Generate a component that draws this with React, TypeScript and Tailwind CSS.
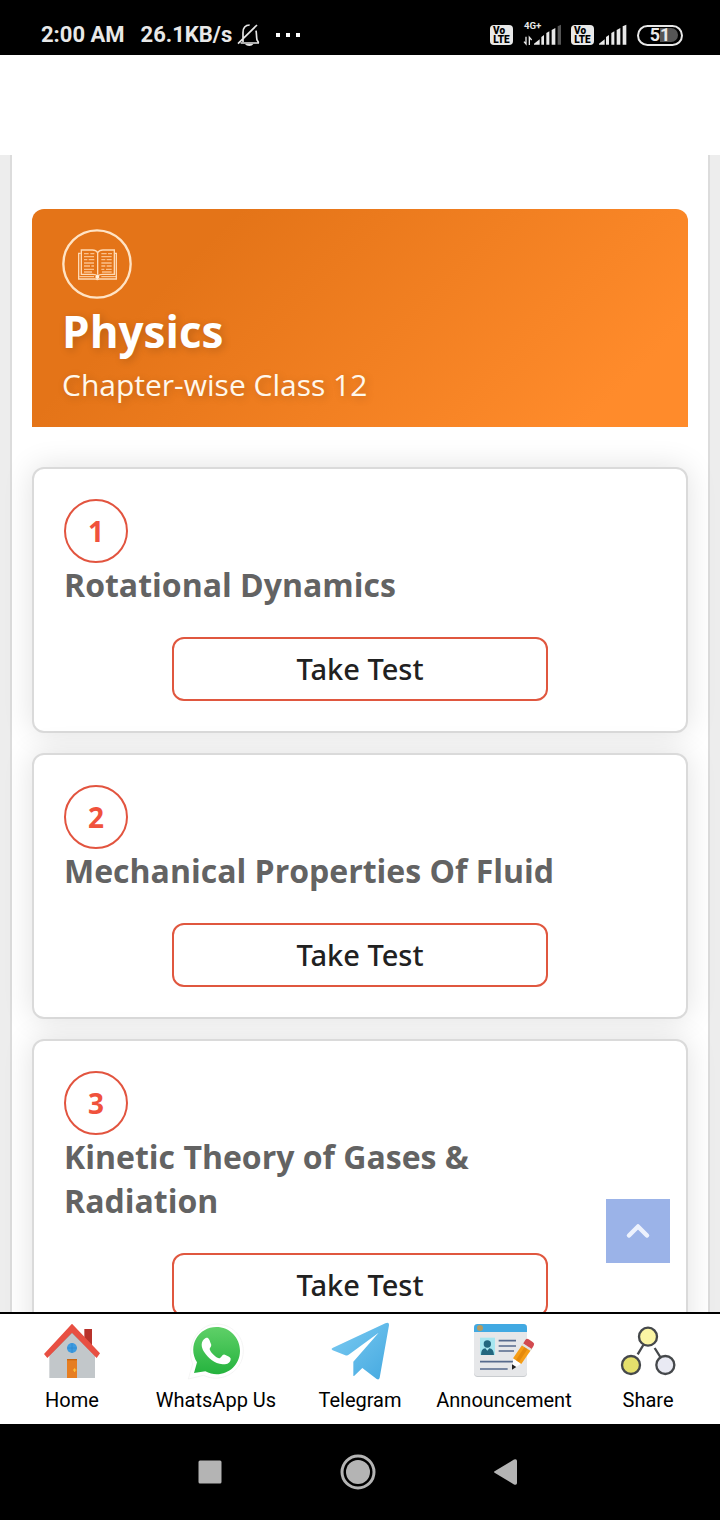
import type { ReactNode } from "react";
import { ChevronUp } from "lucide-react";

type Chapter = {
  id: number;
  title: string;
};

type NavItem = {
  label: string;
  icon: ReactNode;
};

const chapters: Chapter[] = [
  { id: 1, title: "Rotational Dynamics" },
  { id: 2, title: "Mechanical Properties Of Fluid" },
  { id: 3, title: "Kinetic Theory of Gases & Radiation" },
];

const navItems: NavItem[] = [
  { label: "Home", icon: <HomeIcon /> },
  { label: "WhatsApp Us", icon: <WhatsAppIcon /> },
  { label: "Telegram", icon: <TelegramIcon /> },
  { label: "Announcement", icon: <AnnouncementIcon /> },
  { label: "Share", icon: <ShareIcon /> },
];

export default function App() {
  return (
    <div className="flex h-screen flex-col overflow-hidden bg-white font-['Open_Sans','Noto_Sans',sans-serif]">
      <StatusBar />

      <div className="h-[100px] shrink-0" />

      <div className="relative flex min-h-0 flex-1 flex-col">
        <main className="min-h-0 flex-1 overflow-y-auto bg-[#ededed] px-[10px] [scrollbar-width:none]">
          <div className="border-x-2 border-[#dcdcdc] bg-white px-5 pt-[54px] pb-10">
            <SubjectBanner />

            <div className="mt-10 flex flex-col gap-5">
              {chapters.map((chapter) => (
                <ChapterCard key={chapter.id} chapter={chapter} />
              ))}
            </div>
          </div>
        </main>

        <button
          aria-label="Back to top"
          className="absolute right-[50px] bottom-[49px] flex size-16 items-center justify-center bg-[#9bb3e8] text-[#edf2fd]"
        >
          <ChevronUp size={36} strokeWidth={3} />
        </button>
      </div>

      <nav className="grid shrink-0 grid-cols-5 border-t-2 border-black bg-white pt-2 pb-1.5 font-[Roboto,sans-serif]">
        {navItems.map((item) => (
          <a
            key={item.label}
            href="#"
            className="flex flex-col items-center text-xl leading-9 whitespace-nowrap text-black"
          >
            {item.icon}
            {item.label}
          </a>
        ))}
      </nav>

      <SystemBar />
    </div>
  );
}

function SubjectBanner() {
  return (
    <header className="rounded-t-xl bg-[linear-gradient(135deg,#e47418_24%,#ff8b2b_88%)] px-[30px] pt-5 pb-5 text-white">
      <BookIcon />

      <h1 className="text-[44px] leading-[64px] font-bold [text-shadow:2px_2px_8px_rgba(0,0,0,0.18)]">
        Physics
      </h1>

      <p className="text-[30px] leading-11 text-[#fff8ec] [text-shadow:2px_2px_8px_rgba(0,0,0,0.18)]">
        Chapter-wise Class 12
      </p>
    </header>
  );
}

function ChapterCard({ chapter }: { chapter: Chapter }) {
  return (
    <section className="flex flex-col rounded-xl border-2 border-[#dadada] bg-white p-[30px] shadow-[0_0_30px_rgba(0,0,0,0.12)]">
      <span className="flex size-16 items-center justify-center rounded-full border-2 border-[#e2543f] text-[28px] leading-10 font-bold text-[#f0523c]">
        {chapter.id}
      </span>

      <h2 className="pr-12 text-[32px] leading-11 font-bold text-[#636363]">
        {chapter.title}
      </h2>

      <button className="mx-[108px] mt-[30px] h-16 rounded-xl border-2 border-[#e0573f] font-['Noto_Sans','Open_Sans',sans-serif] text-[29px] font-medium text-[#212121]">
        Take Test
      </button>
    </section>
  );
}

function StatusBar() {
  return (
    <div className="flex h-[55px] shrink-0 items-center bg-black pt-[15px] pr-[37px] pl-[41px] font-[Roboto,sans-serif] text-[22px] leading-10 font-bold text-[#e8e8e8]">
      <span>2:00 AM</span>
      <span className="ml-4">26.1KB/s</span>

      <svg viewBox="711 69 69 72" className="ml-[5px] h-6 w-[23px]" fill="none">
        <path
          d="M729 126V98c0-16 8-23 20-23M768 92c2 8 1 20 3 28l5 8M722 129h55M714 131l57-56"
          stroke="#e8e8e8"
          strokeWidth="5"
        />
        <path d="M735 132h25c-4 8-20 8-25 0Z" fill="#e8e8e8" />
      </svg>

      <div className="ml-4 flex gap-1.5">
        <i className="size-1 bg-white" />
        <i className="size-1 bg-white" />
        <i className="size-1 bg-white" />
      </div>

      <div className="ml-auto flex items-center">
        <VolteBadge />

        <svg viewBox="159 60 120 90" className="ml-2.5 h-[30px] w-10">
          <text x="162" y="88" fontSize="29" fontWeight="700" fill="#e8e8e8">
            4G+
          </text>
          <path
            d="M168 110v22l-6-7M178 135v-23l7 8"
            stroke="#e8e8e8"
            strokeWidth="4"
            fill="none"
          />
          <path
            d="M192 134v-3l17-13v16ZM214 134v-23l8-6v29ZM229 134v-35l9-5v40ZM245 134v-44l11-6v50Z"
            fill="#e8e8e8"
          />
          <path d="M263 134V79l10-5v60Z" fill="#555" />
        </svg>

        <div className="ml-2 flex">
          <VolteBadge />
        </div>

        <svg viewBox="381 60 87 90" className="ml-1 h-[30px] w-[29px]">
          <path
            d="M384 134v-3l17-13v16ZM405 134v-23l9-6v29ZM421 134v-35l9-5v40ZM437 134v-44l11-6v50ZM455 134V79l11-5v60Z"
            fill="#e8e8e8"
          />
        </svg>

        <div className="ml-2.5 flex h-[21px] w-[46px] items-center justify-center rounded-full border-2 border-[#e8e8e8] p-px text-lg">
          <span className="flex h-3.5 items-center rounded-full bg-linear-to-r from-black from-50% to-[#555] to-50% px-2">
            51
          </span>
        </div>
      </div>
    </div>
  );
}

function VolteBadge() {
  return (
    <span className="flex h-5 w-[23px] flex-col items-center justify-center rounded-sm bg-[#e8e8e8] text-[10px] leading-[9px] font-black text-black">
      <span className="self-start pl-[3px]">Vo</span>
      <span>LTE</span>
    </span>
  );
}

function SystemBar() {
  return (
    <div className="flex h-24 shrink-0 items-center justify-between bg-black px-[198px] text-[#b4b4b4]">
      <button aria-label="Recent apps">
        <svg viewBox="0 0 24 24" className="size-6" fill="currentColor">
          <rect width="23" height="23" x="0.5" y="0.5" rx="1.5" />
        </svg>
      </button>

      <button aria-label="Home screen">
        <svg viewBox="0 0 36 36" className="size-9" fill="none">
          <circle cx="18" cy="18" r="16" stroke="currentColor" strokeWidth="3" />
          <circle cx="18" cy="18" r="12" fill="currentColor" />
        </svg>
      </button>

      <button aria-label="Back">
        <svg viewBox="0 0 28 26" className="h-[26px] w-7" fill="currentColor">
          <path d="M1 12 20 .5q3-1 3 1.500v22q0 2.500-3 1.500L1 14q-2-1 0-2Z" />
        </svg>
      </button>
    </div>
  );
}

function BookIcon() {
  return (
    <svg viewBox="186 267 210 210" className="size-[70px]" fill="none">
      <circle cx="291" cy="372" r="101" stroke="#ffe3c4" strokeWidth="7" />
      <g stroke="#ffd9b3" strokeWidth="4">
        <path d="M242 340h-6v77h50q6 4 12 0h51v-77h-6" />
        <path d="M293 404V338q-5-8-16-8h-33v73h34q10 0 15 5 5-5 15-5h35v-73h-34q-11 0-16 8" />
        <path d="M238 410h44M304 410h44" strokeWidth="3" />
        <path
          d="M252 341h14M271 341h12M252 350h30M252 359h10M266 359h17M252 369h30M252 378h18M274 378h8M252 388h30M252 396h24M304 341h16M324 341h12M304 350h31M304 359h12M320 359h15M304 369h31M304 378h12M320 378h15M304 388h9M318 388h17M306 396h29"
          strokeWidth="4"
          stroke="#fbc08a"
        />
      </g>
      <circle cx="292" cy="411" r="6" fill="#fff0dd" />
    </svg>
  );
}

function HomeIcon() {
  return (
    <svg viewBox="120 51 192 180" className="h-[60px] w-16">
      <path d="M253 72h23v57l-23-20Z" fill="#b8322b" />
      <path d="M148 144l68-66 69 66v75H148Z" fill="#c2c7ca" />
      <path
        d="M148 152l68-67 69 67v-14l-69-66-68 66Z"
        fill="#9b9fa1"
      />
      <path
        d="M216 56l84 89-10 14-74-76-74 76-10-12Z"
        fill="#e84f42"
      />
      <circle cx="216" cy="129" r="15" fill="#3d9be0" />
      <path d="M201 129h30M216 114v30" stroke="#2f86cc" strokeWidth="2" />
      <rect x="201" y="162" width="30" height="57" fill="#e67e22" />
      <path d="M201 162h30v4h-30Z" fill="#c9660f" />
      <path d="M219 195h10M224 190v11" stroke="#ffc83d" strokeWidth="3" />
    </svg>
  );
}

function WhatsAppIcon() {
  return (
    <svg viewBox="552 51 192 180" className="h-[60px] w-16">
      <defs>
        <linearGradient id="whatsapp" x1="0" y1="0" x2="0" y2="1">
          <stop offset="0" stopColor="#5fd068" />
          <stop offset="1" stopColor="#25b33e" />
        </linearGradient>
      </defs>
      <path
        d="M565 222l13-45c-20-48 10-118 71-120 46 0 81 36 81 81 0 60-65 100-119 73Z"
        fill="#fff"
        stroke="#f0f0f0"
        strokeWidth="2"
      />
      <path
        d="M582 204l9-32c-30-50 5-106 58-106 40 0 71 32 71 71 0 54-56 87-104 62Z"
        fill="url(#whatsapp)"
      />
      <path
        d="M617 99c-16 9-14 28-5 41 14 20 31 35 56 38 12 1 24-4 24-17 1-4-12-10-18-12-7-3-10 11-17 11-11-3-25-17-28-27 0-5 7-9 4-16-5-13-7-21-16-18Z"
        fill="#fff"
      />
    </svg>
  );
}

function TelegramIcon() {
  return (
    <svg viewBox="84 51 192 180" className="h-[60px] w-16">
      <defs>
        <linearGradient id="telegram" x1="0" y1="0" x2="1" y2="1">
          <stop offset="0" stopColor="#7ccbf2" />
          <stop offset="1" stopColor="#45a9e0" />
        </linearGradient>
      </defs>
      <path
        d="M99 128 256 55q12-5 11 6l-28 157q-2 8-9 4l-43-33-24 23q-4 3-3-4v-38l76-87-88 65q-6 5-12 3l-38-15q-7-4 1-8Z"
        fill="url(#telegram)"
      />
    </svg>
  );
}

function AnnouncementIcon() {
  return (
    <svg viewBox="516 51 192 180" className="h-[60px] w-16">
      <rect x="522" y="57" width="159" height="159" rx="11" fill="#c9cccf" />
      <rect x="522" y="57" width="159" height="156" rx="11" fill="#e6e7e9" />
      <path d="M522 81V68q0-11 11-11h137q11 0 11 11v13Z" fill="#41a9e2" />
      <circle cx="540" cy="69" r="9" fill="#b49b61" />
      <rect x="540" y="98" width="45" height="52" fill="#a7e6f0" />
      <circle cx="562" cy="117" r="11" fill="#23677f" />
      <path d="M543 150q0-19 13-20l6 7 6-7q13 1 14 20Z" fill="#23677f" />
      <path
        d="M596 107h52M596 123h52M596 138h46M540 170h100M540 192h83"
        stroke="#566a8c"
        strokeWidth="5"
      />
      <path d="M636 194l4-35 23 17Z" fill="#fff" />
      <path d="M636 194v-16l13 8Z" fill="#222" />
      <path d="M639 160l30-44 26 16-31 45Z" fill="#f59d16" />
      <path d="M648 165l29-44 9 6-29 44Z" fill="#e58a0c" />
      <path d="M669 116l7-11q4-6 10-2l13 9q6 4 2 10l-6 10Z" fill="#d24a50" />
      <path d="M669 115l26 17-3 6-27-17Z" fill="#dfe3e6" />
    </svg>
  );
}

function ShareIcon() {
  return (
    <svg viewBox="948 51 192 180" className="h-[60px] w-16">
      <g stroke="#45484b" strokeWidth="7">
        <path d="M1030 120l-17 28M1064 129l17 27" />
        <circle cx="1044" cy="95" r="27" fill="#fbf5a4" />
        <circle cx="993" cy="180" r="27" fill="#e5e06c" />
        <circle cx="1096" cy="180" r="27" fill="#e9eaf3" />
      </g>
    </svg>
  );
}
